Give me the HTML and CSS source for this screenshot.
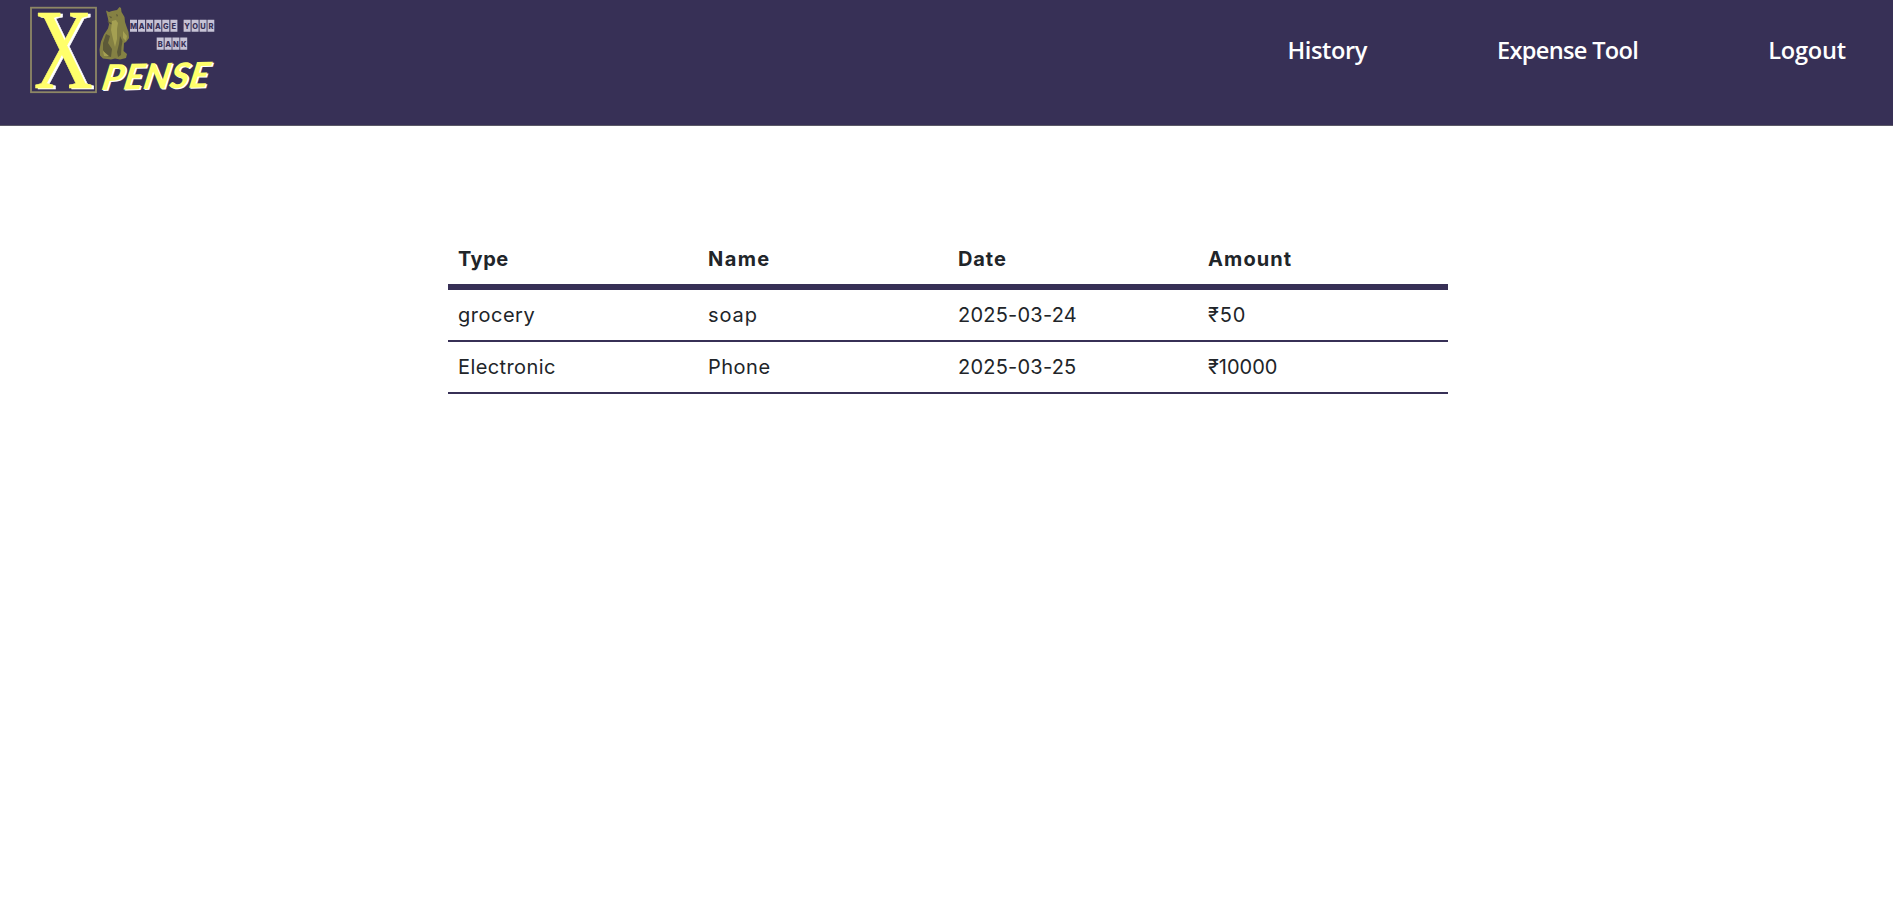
FILE: index.html
```
<!DOCTYPE html>
<html lang="en">
<head>
<meta charset="utf-8">
<title>Xpense</title>
<link rel="stylesheet" href="styles.css">
</head>
<body>
<header class="navbar">
  <a class="brand" aria-label="Xpense">
    <svg class="logo" width="200" height="100" viewBox="20 0 200 100">
      <rect class="frame" x="31" y="7.7" width="65" height="84.5"/>
      <g class="big-x" transform="translate(33.8 88.4) scale(.71 .99)">
        <text class="shade" x="3.5" y="1">X</text>
        <text x="0" y="0">X</text>
      </g>
      <path class="bear" d="M106 10.5L109 12l3-1 5-1 2.500-3 1.500 1 .5 4 3 5 .5 5 2 6 1.500 4 .5 6-3 4-2 1-.5 8 3.500 3-1 4-6 1.500-5-1-4 1-8-1-3-3-.5-6 1.500-8 3-7 4-6 1-4-1-6z"/>
      <path class="bear-dark" d="M106 34l-3 9 0 7 4 6 4 1 1-8-4-6 2-7zM120 36l-1 8-2 8 1 5 3-2 .5-8 1-6zM109 16l3 1-1 1.500zM116 14l2 1-1 2zM107 21l5 2 5-2-1 4-6-1z"/>
      <path class="bear-light" d="M112 21l4-1 2 3-1 6v10l-2 8-2-8-2-9zM123 31l4 5-1 5-3-3zM103 51l6 5-5 0z"/>
      <g class="tiles">
        <path d="M130 19.700h7v12.100h-7zM138.100 19.700h7v12.100h-7zM146.200 19.700h7v12.100h-7zM154.300 19.700h7v12.100h-7zM162.300 19.700h7v12.100h-7zM170.400 19.700h7v12.100h-7zM183.600 19.700h7v12.100h-7zM191.600 19.700h7v12.100h-7zM199.600 19.700h7v12.100h-7zM207.500 19.700h6.800v12.100h-6.800zM156.700 37.600h7v12.100h-7zM164.600 37.600h7v12.100h-7zM172.400 37.600h7v12.100h-7zM180.200 37.600h7v12.100h-7z"/>
        <text y="28.700" x="133.500 141.600 149.700 157.800 165.800 173.900 180.500 187.100 195.100 203.100 210.900">MANAGE YOUR</text>
        <text y="46.600" x="160.200 168.100 175.900 183.700">BANK</text>
      </g>
      <g class="brush" transform="translate(100.500 90) rotate(-1.500) skewX(-12)">
        <text class="shade" x="1.500" y="1" textLength="107" lengthAdjust="spacingAndGlyphs">PENSE</text>
        <text x="0" y="0" textLength="107" lengthAdjust="spacingAndGlyphs">PENSE</text>
      </g>
    </svg>
  </a>
  <nav class="links">
    <a class="history">History</a>
    <a class="tool">Expense Tool</a>
    <a class="logout">Logout</a>
  </nav>
</header>
<main>
  <table class="expenses">
    <thead>
      <tr><th class="h-type">Type</th><th class="h-name">Name</th><th class="h-date">Date</th><th class="h-amount">Amount</th></tr>
    </thead>
    <tbody>
      <tr><td>grocery</td><td class="wide">soap</td><td class="date">2025-03-24</td><td class="wide">₹50</td></tr>
      <tr><td class="type-long">Electronic</td><td>Phone</td><td class="date">2025-03-25</td><td class="amount-long">₹10000</td></tr>
    </tbody>
  </table>
</main>
</body>
</html>
```
FILE: styles.css
```
* { box-sizing: border-box; }
body { margin: 0; background: #fff; color: #212529; font-family: Inter, "Noto Sans", sans-serif; }
.navbar { display: flex; justify-content: space-between; align-items: flex-start; height: 126px; padding: 0 47px 0 20px; background: #373056; border-bottom: 1px solid #5b5967; }
.logo { display: block; }
.frame { fill: none; stroke: #8d8765; stroke-width: 1.8; }
.big-x { font: 115px "Liberation Serif", serif; fill: #ffff6b; stroke: #ffff6b; stroke-width: .6; }
.shade { fill: #fff; stroke: #fff; }
.bear { fill: #858143; }
.bear-dark { fill: #5c5938; }
.bear-light { fill: #a5a052; }
.tiles path { fill: #c6c2d5; }
.tiles text { font: 800 7.5px Inter, sans-serif; fill: #373056; text-anchor: middle; }
.brush { font: italic 900 35px Lato, sans-serif; fill: #ffff6b; }
.brush .shade { stroke: none; }
.links { display: flex; gap: 130px; padding-top: 33px; font: 600 23.6px/34px "Open Sans", sans-serif; color: #fff; }
.history { letter-spacing: -.4px; }
.tool { letter-spacing: -.68px; }
.logout { letter-spacing: -.2px; }
.expenses { width: 1000px; margin: 108px 0 0 448px; table-layout: fixed; border-collapse: separate; border-spacing: 0; font-size: 20px; line-height: 30px; }
.expenses th, .expenses td { padding: 10px; text-align: left; border-bottom: 2px solid #373056; letter-spacing: .5px; }
.expenses th { font-weight: 700; border-bottom-width: 6px; }
.expenses .h-type { letter-spacing: .5px; }
.expenses .h-name { letter-spacing: 1.4px; }
.expenses .h-date { letter-spacing: .9px; }
.expenses .h-amount { letter-spacing: 1.1px; }
.expenses .wide { letter-spacing: .9px; }
.expenses .date { letter-spacing: .22px; }
.expenses .type-long { letter-spacing: .4px; }
.expenses .amount-long { letter-spacing: 0; }
```
